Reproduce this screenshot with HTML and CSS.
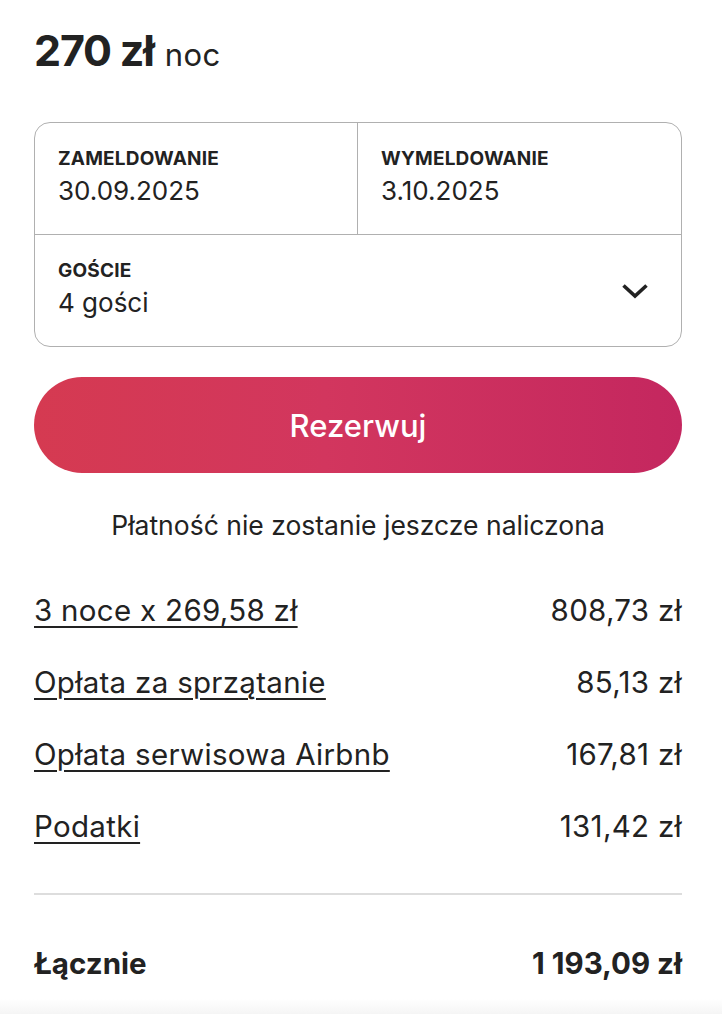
FILE: index.html
```html
<!DOCTYPE html>
<html lang="pl">
<head>
<meta charset="utf-8">
<link rel="stylesheet" href="styles.css">
</head>
<body>
<div class="page">
  <div class="price"><span class="amount">270 zł</span><span class="per">noc</span></div>
  <div class="picker">
    <div class="cell cell-in">
      <div class="label">ZAMELDOWANIE</div>
      <div class="value">30.09.2025</div>
    </div>
    <div class="cell cell-out">
      <div class="label">WYMELDOWANIE</div>
      <div class="value">3.10.2025</div>
    </div>
    <div class="cell cell-guests">
      <div class="guest-text">
        <div class="label">GOŚCIE</div>
        <div class="value">4 gości</div>
      </div>
      <svg class="chevron" viewBox="0 0 28 16" width="28" height="16"><path d="M2.5 2.5 L14 13 L25.5 2.5" fill="none" stroke="#222" stroke-width="3.6" stroke-linecap="butt" stroke-linejoin="miter"/></svg>
    </div>
  </div>
  <button class="reserve">Rezerwuj</button>
  <p class="note">Płatność nie zostanie jeszcze naliczona</p>
  <div class="rows">
    <div class="row"><span class="link">3 noce x 269,58 zł</span><span>808,73 zł</span></div>
    <div class="row"><span class="link">Opłata za sprzątanie</span><span>85,13 zł</span></div>
    <div class="row"><span class="link">Opłata serwisowa Airbnb</span><span>167,81 zł</span></div>
    <div class="row"><span class="link">Podatki</span><span>131,42 zł</span></div>
  </div>
  <div class="divider"></div>
  <div class="row total"><span>Łącznie</span><span>1 193,09 zł</span></div>
</div>
<div class="footer-shade"></div>
</body>
</html>
```

FILE: styles.css
```css
html, body {
  margin: 0;
  padding: 0;
  background: #fff;
}
body {
  font-family: Inter, "Noto Sans", "Liberation Sans", sans-serif;
  color: #222;
  overflow: hidden;
  height: 1014px;
  display: flex;
  flex-direction: column;
}
.page {
  padding: 0 40px 0 34px;
  flex: 1;
}
.price {
  padding-top: 24px;
  line-height: 52px;
  height: 52px;
  white-space: nowrap;
}
.amount {
  font-size: 43px;
  font-weight: 700;
  letter-spacing: -1.2px;
}
.per {
  margin-left: 11px;
  font-size: 31px;
  font-weight: 400;
  letter-spacing: 0.5px;
}
.picker {
  margin-top: 46px;
  border: 1px solid #b0b0b0;
  border-radius: 16px;
  display: grid;
  grid-template-columns: 1fr 1fr;
}
.cell {
  padding: 24px 23px 26px 23px;
}
.cell-in {
  border-right: 1px solid #b0b0b0;
  border-bottom: 1px solid #b0b0b0;
}
.cell-out {
  border-bottom: 1px solid #b0b0b0;
}
.cell-guests {
  grid-column: 1 / span 2;
  display: flex;
  align-items: center;
  justify-content: space-between;
  padding-right: 32px;
}
.label {
  font-size: 19px;
  font-weight: 700;
  line-height: 24px;
  letter-spacing: 0.2px;
}
.value {
  margin-top: 3px;
  font-size: 26px;
  line-height: 34px;
  font-weight: 400;
}
.chevron {
  display: block;
  margin-top: 2px;
}
.reserve {
  display: block;
  width: 100%;
  height: 96px;
  margin-top: 30px;
  border: 0;
  border-radius: 48px;
  background: linear-gradient(to right, #d53a51 0%, #d2365e 45%, #c4275f 100%);
  color: #fff;
  font-family: inherit;
  font-size: 31px;
  font-weight: 500;
  padding: 0;
}
.note {
  margin: 36px 0 0;
  text-align: center;
  font-size: 26.5px;
  line-height: 32px;
}
.rows {
  margin-top: 33px;
}
.row {
  display: flex;
  justify-content: space-between;
  align-items: center;
  height: 72px;
  font-size: 29.5px;
  line-height: 36px;
  letter-spacing: 0.3px;
}
.link {
  text-decoration: underline;
  text-decoration-thickness: 2px;
  text-underline-offset: 5px;
}
.divider {
  margin-top: 31px;
  height: 2px;
  background: #dddddd;
}
.total {
  margin-top: 32px;
  font-weight: 700;
  letter-spacing: 0;
}
.footer-shade {
  height: 18px;
  background: linear-gradient(to bottom, #ffffff, #f5f5f5);
}
```
